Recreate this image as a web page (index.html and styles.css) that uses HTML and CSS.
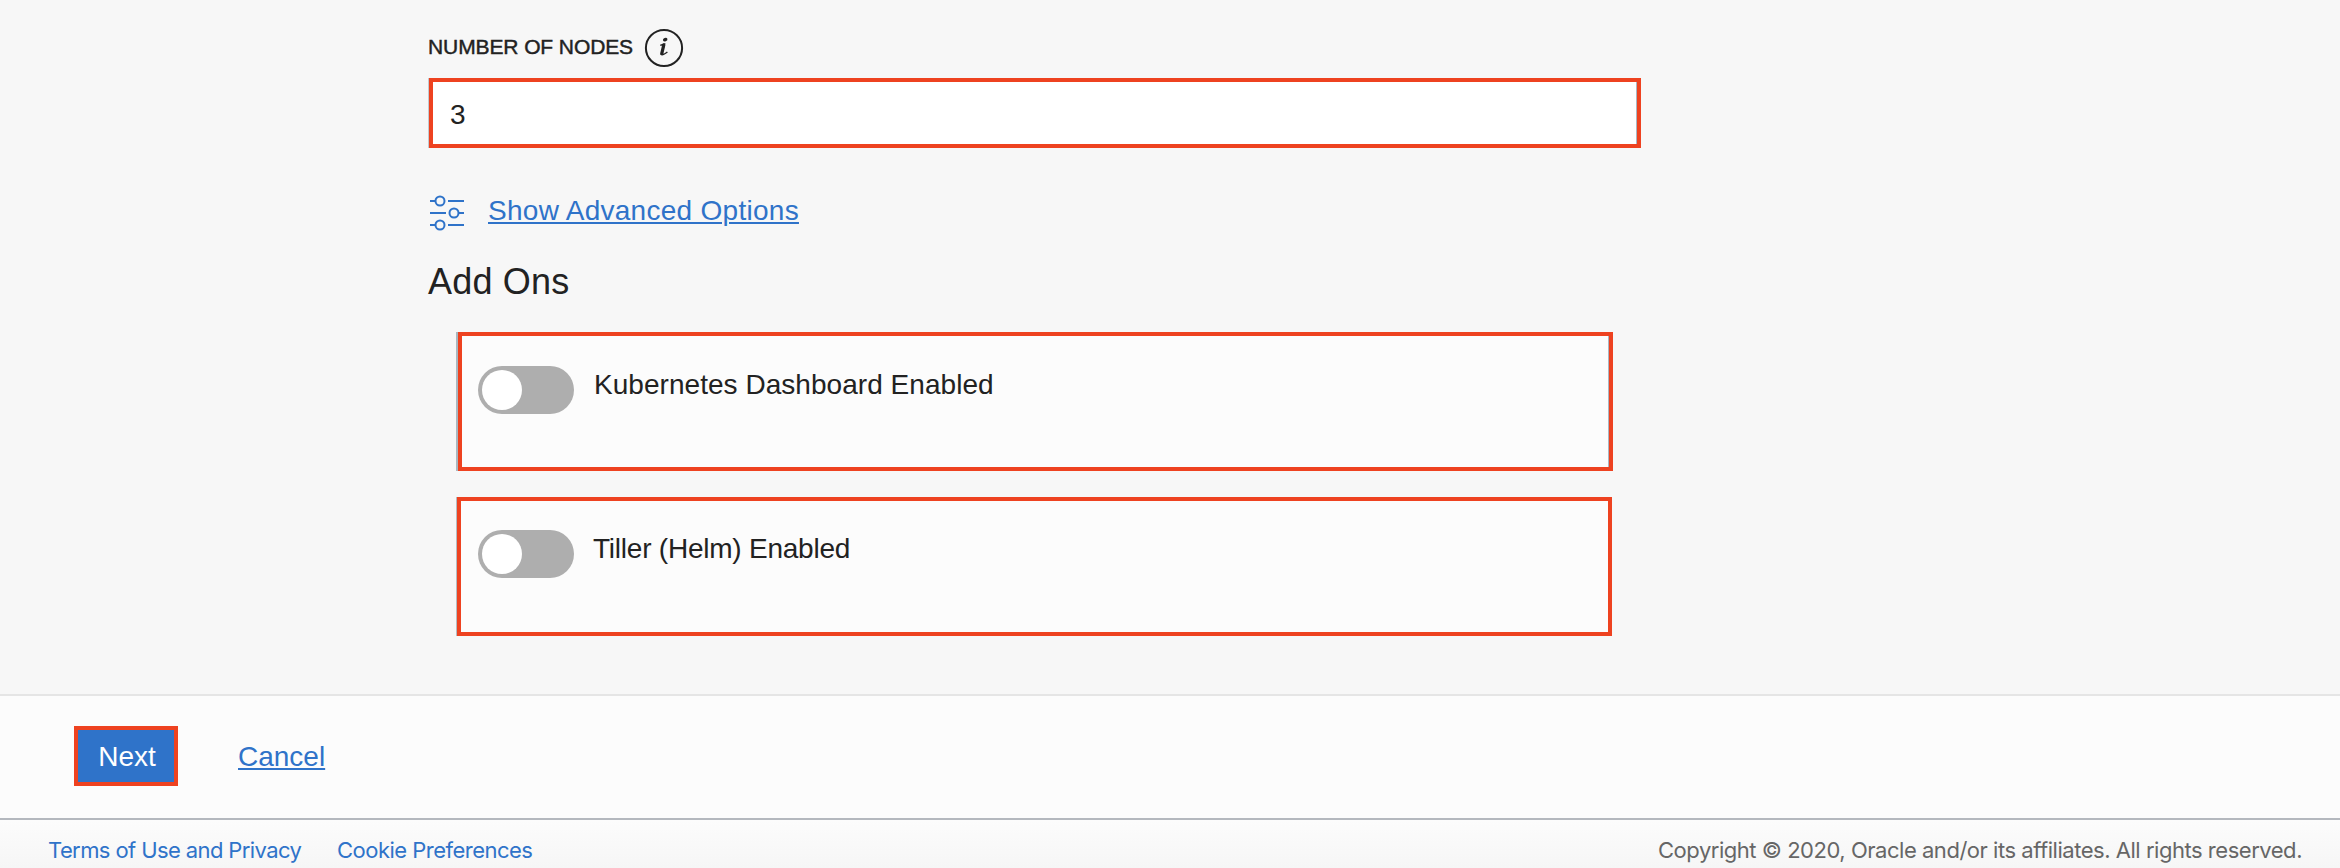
FILE: index.html
```html
<!DOCTYPE html>
<html lang="en">
<head>
<meta charset="utf-8">
<title>Create Cluster</title>
<link rel="stylesheet" href="styles.css">
</head>
<body>
<main class="form">
  <div class="field-label">
    <label class="label-text" for="nodes">NUMBER OF NODES</label>
    <svg class="info" width="40" height="40" viewBox="0 0 40 40" role="img" aria-label="Information">
      <circle cx="20" cy="20" r="18.1" fill="none" stroke="#222" stroke-width="2"/>
      <ellipse cx="21.200" cy="11.600" rx="2.300" ry="1.800" transform="rotate(-20 21.200 11.600)" fill="#222"/>
      <path d="M16.300 17.200 Q18.500 17 20.400 16.200 L17.800 25.200 Q17.500 28.400 23.400 24" fill="none" stroke="#222" stroke-width="1.400"/>
      <path d="M19.800 16.800 L17.700 25.800" stroke="#222" stroke-width="3.200" stroke-linecap="round"/>
    </svg>
  </div>
  <input class="nodes" id="nodes" type="text" value="3">
  <div class="advanced">
    <svg class="sliders" width="36" height="36" viewBox="0 0 36 36" fill="none" stroke="#2f73c9" stroke-width="2">
      <path d="M1 6H6M19 6H35M1 18H17M30 18H35M1 30H6M19 30H35"/>
      <circle cx="11" cy="6" r="4.500"/>
      <circle cx="25" cy="18" r="4.500"/>
      <circle cx="11" cy="30" r="4.500"/>
    </svg>
    <a class="link advanced-link" href="#">Show Advanced Options</a>
  </div>
  <h2 class="heading">Add Ons</h2>
  <section class="addon addon-dashboard">
    <span class="toggle"><span class="knob"></span></span>
    <span class="addon-name name-dashboard">Kubernetes Dashboard Enabled</span>
  </section>
  <section class="addon addon-tiller">
    <span class="toggle"><span class="knob"></span></span>
    <span class="addon-name name-tiller">Tiller (Helm) Enabled</span>
  </section>
</main>
<div class="actions">
  <button class="next" type="button">Next</button>
  <a class="link cancel" href="#">Cancel</a>
</div>
<footer class="footer">
  <a class="terms" href="#">Terms of Use and Privacy</a>
  <a class="cookies" href="#">Cookie Preferences</a>
  <span class="copyright">Copyright © 2020, Oracle and/or its affiliates. All rights reserved.</span>
</footer>
</body>
</html>
```

FILE: styles.css
```css
* { box-sizing: border-box; }
body {
  margin: 0;
  height: 868px;
  overflow: hidden;
  display: flex;
  flex-direction: column;
  background: #f7f7f7;
  color: #222;
  font-family: "Liberation Sans", Arial, sans-serif;
  font-size: 28px;
}
.form {
  height: 694px;
  flex: none;
  padding: 27px 0 0 429px;
  display: flex;
  flex-direction: column;
}
.field-label { display: flex; height: 51px; }
.label-text {
  width: 215px;
  font-size: 21px;
  line-height: 40px;
  letter-spacing: -0.1px;
  margin-left: -1px;
  white-space: nowrap;
  -webkit-text-stroke: 0.45px #222;
}
.info { margin: 1px 0 0 1px; }
.nodes {
  width: 1212px;
  height: 70px;
  margin: 0;
  padding: 3px 0 0 17px;
  border: 4px solid #ee4220;
  border-radius: 0;
  background: #fff;
  box-shadow: inset -1px 0 #a9b7c4, -1px 0 #c3cad1;
  color: #222;
  font: 28px "Liberation Sans", Arial, sans-serif;
}
.advanced { display: flex; height: 61px; margin-top: 43px; padding-top: 4px; }
.link {
  color: #2f73c9;
  line-height: 40px;
  text-decoration: underline;
  text-decoration-thickness: 2px;
  text-underline-offset: 2px;
  white-space: nowrap;
}
.advanced-link { margin: -4px 0 0 23px; letter-spacing: 0.28px; }
.heading {
  margin: 0 0 0 -1px;
  height: 80px;
  font-size: 36px;
  font-weight: 400;
  line-height: 60px;
  letter-spacing: 0.2px;
}
.addon {
  width: 1155px;
  height: 139px;
  border: 4px solid #ee4220;
  background: #fcfcfc;
  display: flex;
}
.addon-dashboard { margin-left: 29px; padding: 30px 0 0 16px; box-shadow: -2px 0 #aab7c0, inset -1px 0 #a9b7c4; }
.addon-tiller { margin: 26px 0 0 28px; padding: 29px 0 0 17px; box-shadow: -1px 0 #b5bcc2; }
.toggle {
  width: 96px;
  height: 48px;
  padding: 4px;
  border-radius: 24px;
  background: #aeaeae;
}
.knob { display: block; width: 40px; height: 40px; border-radius: 50%; background: #fff; }
.addon-name { line-height: 40px; margin-top: -1px; }
.name-dashboard { margin-left: 20px; letter-spacing: 0.04px; }
.name-tiller { margin-left: 19px; letter-spacing: -0.23px; }
.actions {
  flex: none;
  height: 124px;
  border-top: 2px solid #e5e5e5;
  background: #fcfcfc;
  padding: 30px 0 0 74px;
  display: flex;
}
.next {
  width: 104px;
  height: 60px;
  padding: 1px 0 0 2px;
  border: 4px solid #ee4220;
  border-radius: 0;
  background: #2f73c9;
  color: #fff;
  font: 28px "Liberation Sans", Arial, sans-serif;
}
.cancel { margin: 11px 0 0 60px; }
.footer {
  flex: none;
  height: 50px;
  border-top: 2px solid #b4b8be;
  background: linear-gradient(#fcfcfc, #f6f6f6);
  padding: 0 38px 0 48px;
  display: flex;
  font-family: Inter, sans-serif;
  font-size: 22px;
  line-height: 60px;
  white-space: nowrap;
}
.terms, .cookies { color: #2f73c9; text-decoration: none; }
.terms { width: 289px; letter-spacing: -0.6px; }
.cookies { letter-spacing: -0.52px; }
.copyright { margin-left: auto; color: #666; letter-spacing: -0.47px; }
```
